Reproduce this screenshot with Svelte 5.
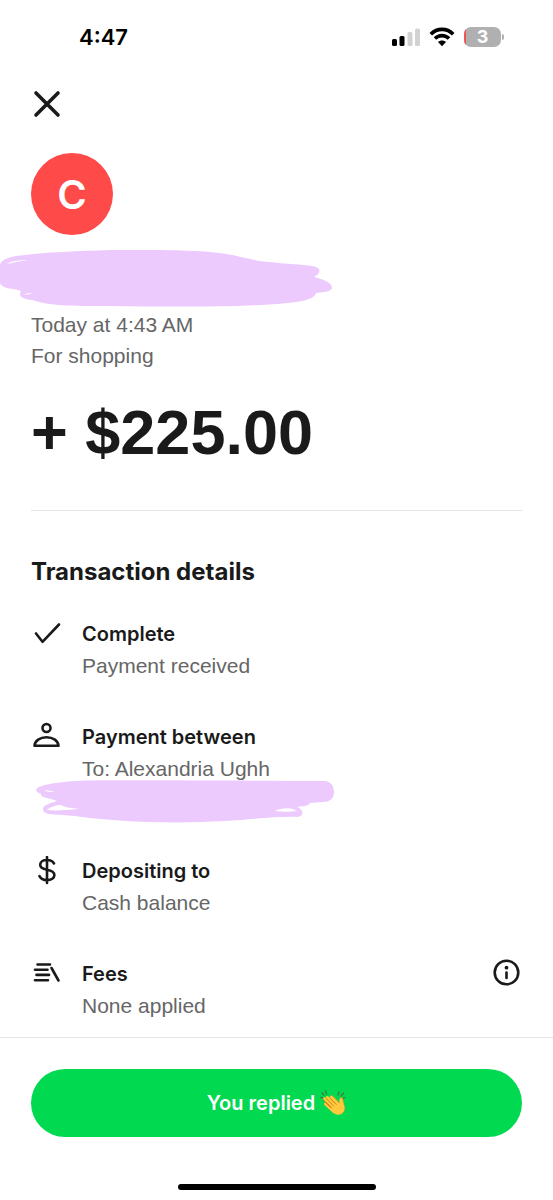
<script>
  const time = '4:47';
  const battery = 3;

  const payment = {
    initial: 'C',
    date: 'Today at 4:43 AM',
    note: 'For shopping',
    amount: '+ $225.00',
  };

  const details = [
    { icon: 'check', title: 'Complete', text: 'Payment received' },
    { icon: 'person', title: 'Payment between', text: 'To: Alexandria Ughh', hidden: true },
    { icon: 'dollar', title: 'Depositing to', text: 'Cash balance' },
    { icon: 'fees', title: 'Fees', text: 'None applied', info: true },
  ];
</script>

<div class="screen">
  <div class="status-bar">
    <span class="time">{time}</span>
    <div class="indicators">
      <svg width="30" height="20" viewBox="0 0 30 20" aria-hidden="true">
        <rect x="1" y="12" width="5" height="7" rx="1.5" />
        <rect x="8.5" y="9" width="5" height="10" rx="1.5" />
        <rect x="16.5" y="5" width="5" height="14" rx="1.5" fill="#d2d2d2" />
        <rect x="24" y="1.5" width="5" height="17.5" rx="1.5" fill="#d2d2d2" />
      </svg>
      <svg width="26" height="20" viewBox="0 0 26 20" aria-hidden="true">
        <g fill="none" stroke="#000" stroke-width="3.6">
          <path d="M1.8 7.2C8 .8 18 .8 24.2 7.2" />
          <path d="M6 11.6c4-4 10-4 14 0" />
        </g>
        <path d="M13 19.2l-4-4.1c2.3-2 5.7-2 8 0z" />
      </svg>
      <div class="battery">
        <div class="cell">
          <span class="level" style="width: {battery}%"></span>
        </div>
        <span class="percent">{battery}</span>
      </div>
    </div>
  </div>

  <main>
    <button class="close" aria-label="Close">
      <svg width="32" height="32" viewBox="0 0 32 32" aria-hidden="true">
        <path d="M5 5l22 22M27 5L5 27" fill="none" stroke="#1a1a1a" stroke-width="3.6" stroke-linecap="round" />
      </svg>
    </button>

    <div class="avatar">{payment.initial}</div>

    <svg class="name-cover" width="334" height="58" viewBox="0 0 334 58" aria-hidden="true">
      <path
        d="M0 16C0 10 7 8 16 6C45 2 80 1 110 0C150 -.5 195 0 220 3C242 6 252 11 270 12C285 14 298 14 312 16C321 17 322 23 314 27C322 29 331 32 332 37C332 42 324 42 316 43C314 50 300 52 278 54C235 57 170 57 110 56C70 56 50 56 32 50C22 49 18 46 21 41C13 38 2 39 0 33Z"
        fill="#edcafd"
      />
      <path d="M7 14c3-3 12-4 21-4-9 1-15 3-21 4zM24 45c2-2 6-2 10-1-4 0-7 0-10 1z" fill="#fff" />
    </svg>

    <p class="muted">{payment.date}</p>
    <p class="muted">{payment.note}</p>
    <p class="amount">{payment.amount}</p>

    <h2>Transaction details</h2>
    <ul>
      {#each details as item}
        <li>
          <svg class="icon" width="31" height="31" viewBox="0 0 31 31" aria-hidden="true">
            {#if item.icon === 'check'}
              <path d="M5 14.5l6.5 8.3L28 5.5" />
            {:else if item.icon === 'person'}
              <circle cx="15.5" cy="6" r="4" />
              <path d="M3.5 23.8C3.8 18.8 9 15.3 15.5 15.3S27.2 18.8 27.5 23.8z" />
            {:else if item.icon === 'dollar'}
              <path d="M16 1v26M23 7.5c-1.400-2.400-3.800-3.500-7-3.500-4 0-6.800 1.800-6.800 4.700 0 3.200 3 4.300 6.800 5 4.500.8 7.400 2.200 7.400 5.400 0 3.100-3 5-7.400 5-3.500 0-6.100-1.300-7.500-4" />
            {:else}
              <path d="M6.5 5.500H19M4 10.700h12.500M5.500 15.900H18M4 21.200h13M20.500 9L27.500 21.500" />
            {/if}
          </svg>
          <div class="text">
            <h3>{item.title}</h3>
            <p class="muted">{item.text}</p>
            {#if item.hidden}
              <svg class="party-cover" width="300" height="44" viewBox="0 0 300 44" aria-hidden="true">
                <path
                  d="M4 7C10 4 30 1 55 .5C120 0 220 1 289 1C296 1 299 6 299 12C299 19 294 22 288 22L275 23C273 27 265 26 262 27C268 29 270 36 263 37C245 36 220 39 190 41C140 44 80 42 40 36C22 34 10 36 8 30C7 25 16 23 22 21C15 18 5 18 6 14C0 12 0 9 4 7Z"
                  fill="#edcafd"
                />
                <path d="M12 30c3-3 9-5 14-5 3 2 9 3 18 4-12 1-24 2-32 1zM240 31c7-3 15-4 22 0-8 1-15 1-22 0zM9 10c4 0 7 1 10 2-4 0-7 0-10-2z" fill="#fff" />
              </svg>
            {/if}
          </div>
          {#if item.info}
            <button class="info" aria-label="About fees">
              <svg class="icon" width="31" height="31" viewBox="0 0 31 31" aria-hidden="true">
                <circle cx="15.5" cy="13.5" r="11.8" />
                <path d="M15.5 13.5v5.5" />
                <circle class="dot" cx="15.5" cy="8.7" r="1.9" />
              </svg>
            </button>
          {/if}
        </li>
      {/each}
    </ul>
  </main>

  <footer>
    <button class="reply">
      You replied
      <svg width="26" height="26" viewBox="0 0 26 26" role="img" aria-label="Clapping hands">
        <path d="M2 3l2 2M5.5 .8l1 3M1 7.5l2.5.3M18 5l1-3M21 6l2.5-3M22.5 8.5l2.5-1" fill="none" stroke="#447a42" stroke-width="1.3" stroke-linecap="round" />
        <path d="M10 6c1-1.400 2.500-.7 3.500.4l6 6.300.3-4c.2-2 2.600-1.900 3 0l2 8.300c.6 3-1.500 6.800-4.800 7.500z" fill="#e9a224" />
        <path d="M3.300 9.500C2.300 8 4 6.600 5.300 7.800L6 8.400C5 6.500 7 5 8.500 6.500l1.500 1.600c-.7-1.800 1.100-3 2.400-1.700l7.200 7.300-.2-3.600c0-2 2.300-2.300 2.900-.3l2 7.200c1 4-2.300 8-6.300 7.700-2.500-.1-4.500-1.300-6.300-3L4.500 15c-1.300-1.400.2-3 1.600-2z" fill="#ffc83d" />
        <path d="M6 8.400l7.500 7.400M10 8.100l6.200 6.300M3.600 9.900l7.700 7.500M6 13l4.500 4.200" fill="none" stroke="#c9781a" stroke-width=".9" stroke-linecap="round" />
      </svg>
    </button>
    <div class="home-indicator"></div>
  </footer>
</div>

<style>
  :global(body) {
    margin: 0;
    background: #fff;
  }

  .screen {
    display: flex;
    flex-direction: column;
    min-height: 100vh;
    color: #1a1a1a;
    font-family: Inter, "Liberation Sans", sans-serif;
    font-size: 20px;
    line-height: 31px;
  }

  .status-bar {
    display: flex;
    align-items: center;
    justify-content: space-between;
    height: 74px;
    padding: 0 49px 0 79px;
    color: #000;
  }

  .time {
    font-size: 22px;
    font-weight: 600;
  }

  .indicators {
    display: flex;
    align-items: center;
    gap: 8px;
  }

  .battery {
    position: relative;
    display: flex;
    justify-content: center;
    width: 37px;
    height: 20px;
    margin: 0 3px 0 1px;
  }

  .battery::after {
    content: '';
    position: absolute;
    top: 7px;
    right: -3px;
    width: 2px;
    height: 6px;
    border-radius: 0 2px 2px 0;
    background: #b0b0b0;
  }

  .cell {
    position: absolute;
    inset: 0;
    overflow: hidden;
    border-radius: 7px;
    background: #b0b0b0;
  }

  .level {
    display: block;
    min-width: 2px;
    height: 100%;
    background: #f4544f;
  }

  .percent {
    position: relative;
    color: #fff;
    font-size: 18px;
    font-weight: 700;
    line-height: 20px;
  }

  main {
    padding: 14px 31px 15px;
  }

  button {
    padding: 0;
    border: 0;
    background: none;
    color: inherit;
    font: inherit;
    cursor: pointer;
  }

  svg {
    display: block;
    flex: none;
  }

  p,
  h2,
  h3,
  ul {
    margin: 0;
    padding: 0;
  }

  .close {
    display: block;
  }

  .avatar {
    display: flex;
    align-items: center;
    justify-content: center;
    width: 82px;
    height: 82px;
    margin-top: 33px;
    border-radius: 50%;
    background: #ff4a4a;
    color: #fff;
    font-size: 40px;
    font-weight: 600;
  }

  .name-cover {
    margin: 15px 0 1px -31px;
  }

  .muted {
    color: #666;
    font-family: "Liberation Sans", Arial, sans-serif;
    font-size: 21px;
  }

  .amount {
    padding: 24px 0 41px;
    border-bottom: 1px solid #e4e4e4;
    font-family: "Liberation Sans", Arial, sans-serif;
    font-size: 63px;
    font-weight: 700;
    line-height: 74px;
  }

  h2 {
    margin: 45px 0 32px;
    font-size: 24px;
    font-weight: 700;
    line-height: 31px;
  }

  ul {
    display: flex;
    flex-direction: column;
    gap: 41px;
    list-style: none;
  }

  li {
    display: flex;
    align-items: flex-start;
    gap: 20px;
  }

  .text {
    flex: 1;
  }

  h3 {
    font-size: 20px;
    font-weight: 600;
    line-height: 31px;
  }

  .icon {
    fill: none;
    stroke: #1a1a1a;
    stroke-width: 2.6;
    stroke-linecap: round;
    stroke-linejoin: round;
  }

  .dot {
    fill: #1a1a1a;
    stroke: none;
  }

  .party-cover {
    margin: -4px 0 -9px -47px;
  }

  footer {
    margin-top: auto;
    padding: 31px 31px 10px;
    border-top: 1px solid #e4e4e4;
  }

  .reply {
    display: flex;
    align-items: center;
    justify-content: center;
    gap: 5px;
    width: 100%;
    height: 68px;
    border-radius: 34px;
    background: #00d950;
    color: #fff;
    font-weight: 600;
  }

  .home-indicator {
    width: 198px;
    height: 6px;
    margin: 47px auto 0;
    border-radius: 3px;
    background: #000;
  }
</style>
